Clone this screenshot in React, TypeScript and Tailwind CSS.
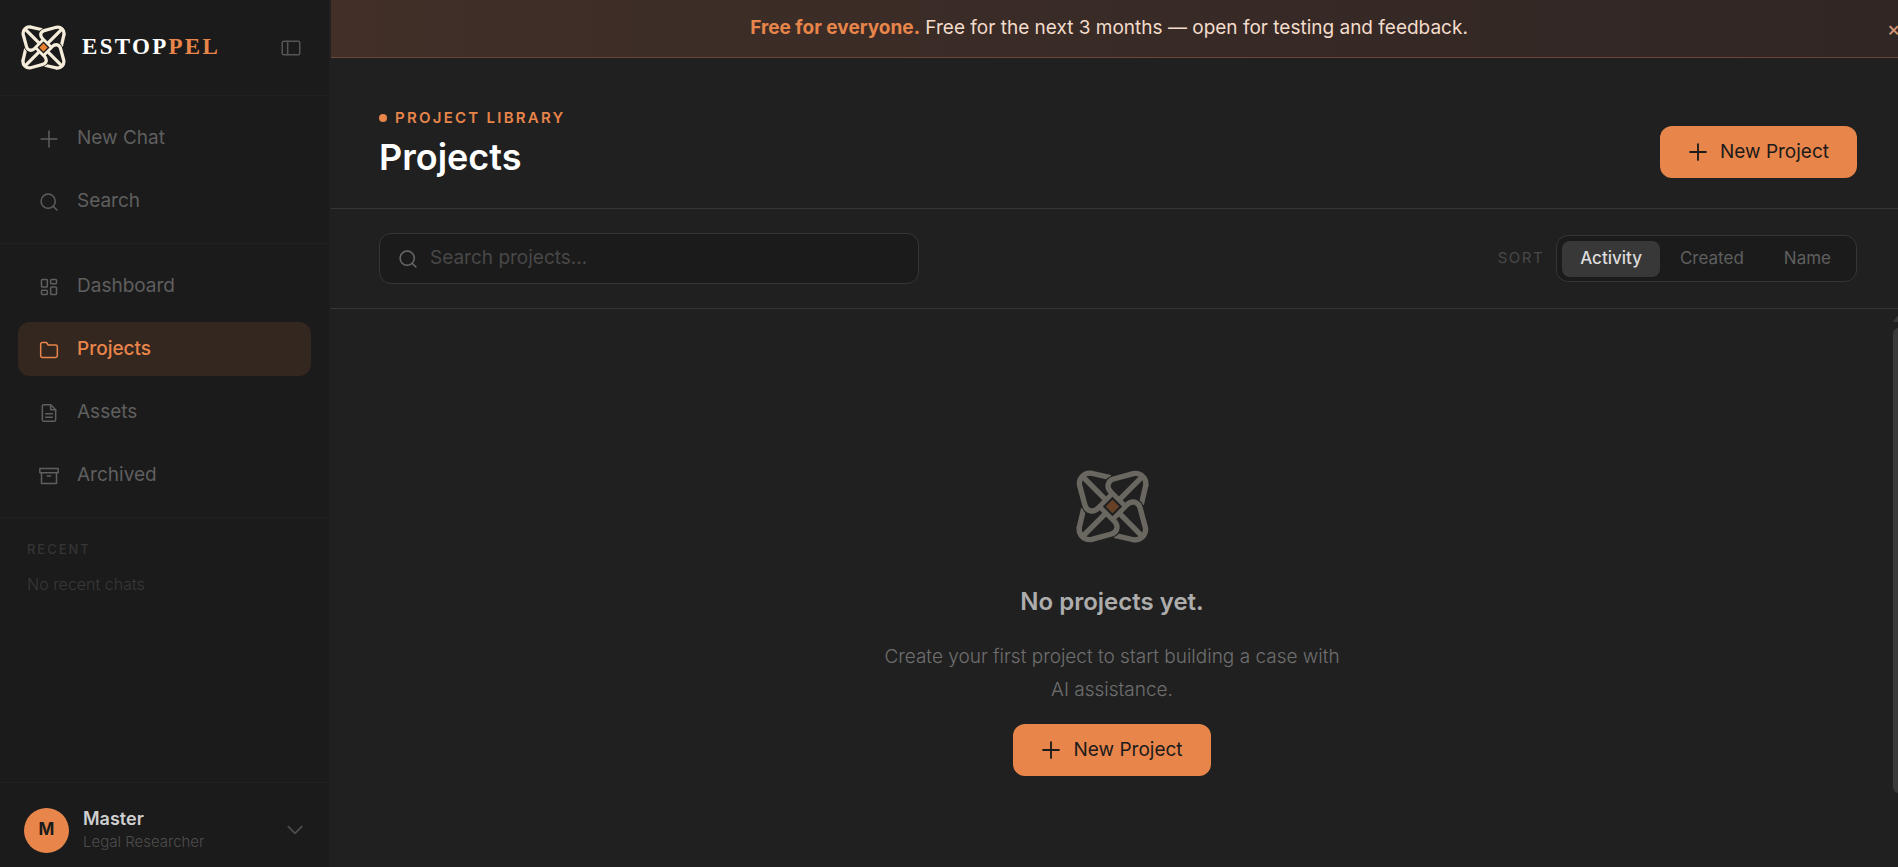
import type { ReactNode } from 'react';

const iconBox = 'h-5 w-5 shrink-0';

function Icon({ children, className = iconBox, weight = 1.8 }: { children: ReactNode; className?: string; weight?: number }) {
  return (
    <svg viewBox="0 0 24 24" fill="none" stroke="currentColor" strokeWidth={weight} strokeLinecap="round" strokeLinejoin="round" className={className} aria-hidden="true">
      {children}
    </svg>
  );
}

const plus = <path d="M12 2.5v19M2.5 12h19" />;
const magnifier = (
  <>
    <circle cx="11" cy="11" r="8.5" />
    <path d="m21.5 21.5-4.5-4.5" />
  </>
);
const dashboard = (
  <>
    <rect x="3" y="3" width="7" height="9" rx="1" />
    <rect x="14" y="3" width="7" height="5" rx="1" />
    <rect x="14" y="12" width="7" height="9" rx="1" />
    <rect x="3" y="16" width="7" height="5" rx="1" />
  </>
);
const folder = <path d="M22 19a2 2 0 0 1-2 2H4a2 2 0 0 1-2-2V5a2 2 0 0 1 2-2h5l2 3h9a2 2 0 0 1 2 2z" />;
const file = (
  <>
    <path d="M14 2H6a2 2 0 0 0-2 2v16a2 2 0 0 0 2 2h12a2 2 0 0 0 2-2V8z" />
    <path d="M14 2v6h6M16 13H8M16 17H8" />
  </>
);
const archive = (
  <>
    <path d="M21 8v13H3V8" />
    <rect x="1" y="3" width="22" height="5" />
    <path d="M10 12h4" />
  </>
);

const turns = [0, 90, 180, 270];

function Mark({ className, backdrop }: { className: string; backdrop: string }) {
  return (
    <svg viewBox="-109 -109 218 218" fill="none" strokeLinecap="butt" strokeLinejoin="round" className={className} aria-hidden="true">
      {turns.map((t) => (
        <path key={t} transform={`rotate(${t})`} stroke="#f5ecd9" strokeWidth="16" d="M100 -66L86 -6" />
      ))}
      {turns.map((t) => (
        <path key={t} transform={`rotate(${t})`} stroke={backdrop} strokeWidth="22" d="M-13 -53C-18 -66 -12 -77 0 -81L18 -86" />
      ))}
      {turns.map((t) => (
        <g key={t} transform={`rotate(${t})`} stroke="#f5ecd9" strokeWidth="16">
          <path d="M37 -1L-4 -42C-20 -58 -14 -77 3 -82L62 -98A31 31 0 0 1 99 -62" />
          <path d="M20 -20L89 -89" />
        </g>
      ))}
      <path d="M0 -29L29 0L0 29L-29 0Z" fill={backdrop} />
      <path d="M0 -20L20 0L0 20L-20 0Z" fill="#e8802f" />
    </svg>
  );
}

function NavItem({ icon, label, active = false }: { icon: ReactNode; label: string; active?: boolean }) {
  return (
    <a
      href="#"
      aria-current={active ? 'page' : undefined}
      className={`flex h-[54px] items-center gap-[18px] rounded-xl px-[21px] pt-px text-[19px] ${active ? 'bg-[#342720] font-medium text-[#e8854a]' : 'text-[#5f5f5f]'}`}
    >
      <Icon>{icon}</Icon>
      {label}
    </a>
  );
}

function NewProject() {
  return (
    <button type="button" className="flex h-13 shrink-0 items-center gap-3 rounded-xl bg-[#e8854a] px-7 text-[19px] text-[#1b1b1b]">
      <Icon weight={2.2}>{plus}</Icon>
      New Project
    </button>
  );
}

function Sidebar() {
  return (
    <aside className="flex w-[331px] shrink-0 flex-col border-r-2 border-[#202020] bg-[#1b1b1b]">
      <div className="flex h-24 items-center border-b border-[#202020] pr-7 pl-[21px]">
        <Mark className="h-[45px] w-[45px]" backdrop="#1b1b1b" />
        <span className="ml-4 font-['Liberation_Serif',serif] text-[23px] font-bold tracking-widest text-white">
          ESTOP<span className="text-[#e8854a]">PEL</span>
        </span>
        <button type="button" aria-label="Toggle sidebar" className="ml-auto text-[#555]">
          <Icon>
            <rect x="1.5" y="4" width="21" height="16" rx="1.5" />
            <path d="M8 4v16" />
          </Icon>
        </button>
      </div>
      <nav className="flex flex-col gap-[9px] border-b border-[#202020] px-[18px] py-[15px]">
        <NavItem icon={plus} label="New Chat" />
        <NavItem icon={magnifier} label="Search" />
      </nav>
      <nav className="flex flex-col gap-[9px] border-b border-[#202020] px-[18px] py-[15px]">
        <NavItem icon={dashboard} label="Dashboard" />
        <NavItem icon={folder} label="Projects" active />
        <NavItem icon={file} label="Assets" />
        <NavItem icon={archive} label="Archived" />
      </nav>
      <section className="flex-1 px-[27px] pt-[21px]">
        <h2 className="text-[13px] leading-5 font-medium tracking-[0.15em] text-[#353535]">RECENT</h2>
        <p className="mt-[13px] text-base font-light text-[#383838]">No recent chats</p>
      </section>
      <button type="button" className="flex items-center border-t border-[#202020] px-6 pt-6 pb-[14px] text-left">
        <span className="flex h-[45px] w-[45px] items-center justify-center rounded-full bg-[#e8854a] text-[17px] font-bold text-[#1b1b1b]">M</span>
        <span className="ml-[14px] flex flex-col">
          <span className="text-lg leading-6 font-semibold text-[#cfcfcf]">Master</span>
          <span className="text-[15px] leading-[22px] font-light text-[#4d4d4d]">Legal Researcher</span>
        </span>
        <Icon className="ml-auto h-5 w-5 text-[#4d4d4d]" weight={2.2}>
          <path d="m4 8 8 8 8-8" />
        </Icon>
      </button>
    </aside>
  );
}

function Sorter() {
  return (
    <div className="flex items-center gap-3">
      <span className="text-[15px] tracking-widest text-[#484848]">SORT</span>
      <div className="flex h-[47px] items-center rounded-xl border border-[#363636] bg-[#1b1b1b] px-[5px] text-[17px]">
        <button type="button" className="h-9 rounded-lg bg-[#383838] px-[18px] font-medium text-[#dcdcdc]">Activity</button>
        <button type="button" className="h-9 px-5 text-[#5f5f5f]">Created</button>
        <button type="button" className="h-9 px-5 text-[#5f5f5f]">Name</button>
      </div>
    </div>
  );
}

export default function App() {
  return (
    <div className="flex h-screen overflow-hidden bg-[#202020] font-['Inter',sans-serif]">
      <Sidebar />
      <main className="-mr-[7px] flex min-w-0 flex-1 flex-col">
        <div className="flex h-[58px] shrink-0 items-center border-b border-[#6b4636] bg-linear-to-r from-[#412f28] to-[#302624]">
          <p className="flex-1 text-center text-[19px] text-[#f3dccb]">
            <strong className="font-bold text-[#e8854a]">Free for everyone.</strong> Free for the next 3 months — open for testing and feedback.
          </p>
          <button type="button" aria-label="Dismiss" className="w-[18px] text-left text-xl leading-5 font-medium text-[#d29373]">×</button>
        </div>
        <header className="flex h-[151px] shrink-0 items-end justify-between border-b border-[#363636] px-12 pb-[30px]">
          <div>
            <p className="flex items-center gap-2 text-[15px] leading-5 font-semibold tracking-[0.15em] text-[#e8854a]">
              <span className="h-2 w-2 rounded-full bg-[#e8854a]" />
              PROJECT LIBRARY
            </p>
            <h1 className="mt-2 text-4xl leading-[42px] font-semibold text-white">Projects</h1>
          </div>
          <NewProject />
        </header>
        <div className="flex h-[100px] shrink-0 items-center justify-between border-b border-[#363636] px-12">
          <label className="flex h-[51px] w-[540px] items-center gap-3 rounded-xl border border-[#363636] bg-[#1b1b1b] px-[18px] text-[#6a6a6a]">
            <Icon>{magnifier}</Icon>
            <input type="search" aria-label="Search projects" placeholder="Search projects…" className="min-w-0 flex-1 bg-transparent text-[19px] outline-none placeholder:text-[#484848]" />
          </label>
          <Sorter />
        </div>
        <div className="flex min-h-0 flex-1">
          <section className="flex flex-1 flex-col items-center pt-[161px] text-center">
            <Mark className="h-[73px] w-[73px] opacity-35" backdrop="#202020" />
            <h2 className="mt-[43px] text-2xl leading-8 font-semibold text-[#adadad]">No projects yet.</h2>
            <p className="mt-[22px] max-w-[470px] text-[19px] leading-[33px] font-light text-[#6f6f6f]">Create your first project to start building a case with AI assistance.</p>
            <div className="mt-[18px]">
              <NewProject />
            </div>
          </section>
          <div className="flex w-3 flex-col gap-[6px] pt-[5px]" aria-hidden="true">
            <svg viewBox="0 0 12 8" className="h-2 w-full fill-[#3a3a3a]">
              <path d="M6 0 12 8H0z" />
            </svg>
            <div className="h-[84%] rounded-md bg-[#3a3a3a]" />
          </div>
        </div>
      </main>
    </div>
  );
}
